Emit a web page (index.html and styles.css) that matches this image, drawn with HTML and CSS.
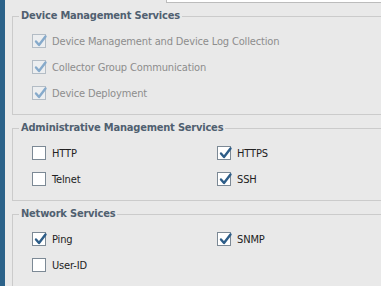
FILE: index.html
```html
<!DOCTYPE html>
<html lang="en">
<head>
  <meta charset="UTF-8">
  <title>Service Settings</title>
  <link rel="stylesheet" href="styles.css">
</head>
<body>
  <div class="sidebar"></div>
  <div class="main">
    <div class="top-row">
      <div class="top-input"></div>
    </div>

    <fieldset class="group">
      <legend>Device Management Services</legend>
      <div class="options single">
        <label class="option disabled">
          <span class="box checked"><svg viewBox="0 0 14 14"><path d="M3 6.5 L6 10 L12.5 1.5"/></svg></span>
          Device Management and Device Log Collection
        </label>
        <label class="option disabled">
          <span class="box checked"><svg viewBox="0 0 14 14"><path d="M3 6.5 L6 10 L12.5 1.5"/></svg></span>
          Collector Group Communication
        </label>
        <label class="option disabled">
          <span class="box checked"><svg viewBox="0 0 14 14"><path d="M3 6.5 L6 10 L12.5 1.5"/></svg></span>
          Device Deployment
        </label>
      </div>
    </fieldset>

    <fieldset class="group">
      <legend>Administrative Management Services</legend>
      <div class="options">
        <label class="option"><span class="box"></span>HTTP</label>
        <label class="option">
          <span class="box checked"><svg viewBox="0 0 14 14"><path d="M3 6.5 L6 10 L12.5 1.5"/></svg></span>HTTPS
        </label>
        <label class="option"><span class="box"></span>Telnet</label>
        <label class="option">
          <span class="box checked"><svg viewBox="0 0 14 14"><path d="M3 6.5 L6 10 L12.5 1.5"/></svg></span>SSH
        </label>
      </div>
    </fieldset>

    <fieldset class="group">
      <legend>Network Services</legend>
      <div class="options">
        <label class="option">
          <span class="box checked"><svg viewBox="0 0 14 14"><path d="M3 6.5 L6 10 L12.5 1.5"/></svg></span>Ping
        </label>
        <label class="option">
          <span class="box checked"><svg viewBox="0 0 14 14"><path d="M3 6.5 L6 10 L12.5 1.5"/></svg></span>SNMP
        </label>
        <label class="option"><span class="box"></span>User-ID</label>
      </div>
    </fieldset>
  </div>
</body>
</html>
```

FILE: styles.css
```css
html, body {
  height: 100%;
}
body {
  margin: 0;
  display: flex;
  background-color: #e9e9e9;
  font-family: "DejaVu Sans Condensed", "DejaVu Sans", Tahoma, sans-serif;
  font-size: 11px;
  letter-spacing: -0.15px;
  color: #222;
  overflow: hidden;
}
.sidebar {
  width: 5px;
  flex-shrink: 0;
  background-color: #2b6289;
}
.main {
  flex: 1;
  padding-left: 7px;
  overflow: hidden;
}
.top-row {
  height: 3px;
  padding-left: 154px;
  margin-bottom: 5px;
}
.top-input {
  height: 2px;
  margin-right: -10px;
  background-color: #fff;
  border: 1px solid #bcbcbc;
  border-top: none;
}
.group {
  margin: 0 -20px 5px 0;
  padding: 4px 0 8px 6px;
  border: 1px solid #cbcbcb;
  min-width: 0;
}
.group legend {
  padding: 0 2px;
  font-weight: bold;
  font-size: 11px;
  letter-spacing: -0.2px;
  line-height: 16px;
  color: #506070;
}
.options {
  display: grid;
  grid-template-columns: 185px 185px;
  grid-auto-rows: 26px;
  padding-left: 13px;
}
.options.single {
  grid-template-columns: 1fr;
}
.option {
  display: flex;
  align-items: center;
  gap: 6px;
  white-space: nowrap;
}
.box {
  width: 12px;
  height: 12px;
  border: 1px solid #7c8995;
  background-color: #fff;
  position: relative;
  flex-shrink: 0;
}
.box svg {
  position: absolute;
  left: 0;
  top: 0;
  width: 14px;
  height: 14px;
  overflow: visible;
}
.box svg path {
  fill: none;
  stroke: #2d5d88;
  stroke-width: 2.4;
  stroke-linecap: round;
  stroke-linejoin: round;
}
.disabled {
  color: #8d8d8d;
}
.disabled .box {
  border-color: #b3bcc5;
  background-color: #eceef0;
}
.disabled .box svg path {
  stroke: #86aacb;
}
```
